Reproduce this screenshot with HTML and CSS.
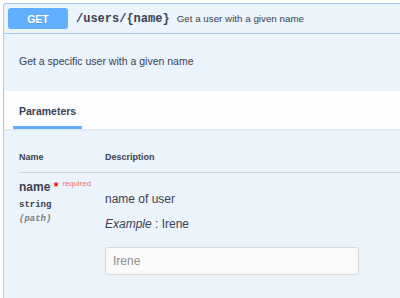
FILE: index.html
```html
<html>
<head>
<meta http-equiv="Content-Type" content="text/html; charset=utf-8">
<title>GET /users/{name}</title>
<link rel="stylesheet" href="styles.css">
</head>
<body>

<div class="opblock">
  <div class="summary">
    <span class="method">GET</span>
    <span class="path">/users/{name}</span>
    <span class="summary-text">Get a user with a given name</span>
  </div>

  <div class="description">
    <p>Get a specific user with a given name</p>
  </div>

  <div class="section-header">
    <span class="tab">Parameters</span>
  </div>

  <div class="table-container">
    <table class="parameters">
      <thead>
        <tr>
          <td class="col-name">Name</td>
          <td>Description</td>
        </tr>
      </thead>
      <tbody>
        <tr>
          <td class="col-name">
            <div class="param-name">name<span class="star">&nbsp;*</span><span class="required">required</span></div>
            <div class="param-type">string</div>
            <div class="param-in">(path)</div>
          </td>
          <td class="col-desc">
            <p>name of user</p>
            <p class="example"><i>Example</i> : Irene</p>
            <input type="text" class="param-input" placeholder="Irene">
          </td>
        </tr>
      </tbody>
    </table>
  </div>
</div>

</body>
</html>
```

FILE: styles.css
```css
html, body {
  margin: 0;
  overflow: hidden;
  background: #fff;
  font-family: "Liberation Sans", Arial, Helvetica, sans-serif;
  color: #3b4151;
}

/* one operation block, cut off by the right and bottom edges */
.opblock {
  box-sizing: border-box;
  margin: 3px 0 0 3px;
  height: 295px;
  border: 1px solid #a3cbf5;
  border-right: none;
  border-bottom: none;
  border-top-left-radius: 3px;
  background: #ebf3fb;
}

.summary {
  display: flex;
  align-items: center;
  padding: 4px;
  border-bottom: 1px solid #a3cbf5;
}

.method {
  min-width: 60px;
  padding: 4.5px 0;
  margin-right: 8px;
  border-radius: 3px;
  background: #61affe;
  color: #fff;
  font-size: 10.5px;
  line-height: 12px;
  font-weight: bold;
  text-align: center;
  text-shadow: 0 1px 0 rgba(0,0,0,.1);
}

.path {
  padding-right: 7px;
  font-family: "Liberation Mono", "Courier New", monospace;
  font-size: 12px;
  font-weight: bold;
}

.summary-text {
  font-size: 9.8px;
}

.description {
  padding: 20px 15px 22px;
}
.description p {
  margin: 0;
  font-size: 10.5px;
  line-height: 15px;
}

.section-header {
  padding: 14px 15px 0;
  background: rgba(255,255,255,.85);
  box-shadow: 0 1px 2px rgba(0,0,0,.08);
}
.tab {
  display: inline-block;
  margin-left: -6px;
  padding: 0 6px 9px;
  border-bottom: 3px solid #61affe;
  font-size: 10.5px;
  line-height: 12px;
  font-weight: bold;
}

/* the table runs on past the right edge */
.table-container {
  padding: 14px 0 0 15px;
}

.parameters {
  width: 100%;
  border-collapse: collapse;
}
.parameters thead td {
  padding: 9px 0;
  font-size: 9px;
  line-height: 11px;
  font-weight: bold;
  border-bottom: 1px solid #d0d8e3;
}
.parameters tbody td {
  padding: 7px 0 0;
  vertical-align: top;
}
.col-name { width: 86px; }

.param-name {
  font-size: 12px;
  line-height: 14px;
  font-weight: bold;
}
.star { color: #f00; }
.required {
  position: relative;
  top: -5px;
  padding-left: 4px;
  color: rgba(255,0,0,.6);
  font-size: 7.8px;
  font-weight: normal;
}
.param-type {
  margin-top: 4px;
  font-family: "Liberation Mono", "Courier New", monospace;
  font-size: 9px;
  line-height: 11px;
  font-weight: bold;
}
.param-in {
  margin-top: 3px;
  font-family: "Liberation Mono", "Courier New", monospace;
  font-size: 9px;
  line-height: 11px;
  font-style: italic;
  font-weight: bold;
  color: #808080;
}

.col-desc p {
  margin: 12px 0 0;
  font-size: 12px;
  line-height: 14px;
}
.col-desc p.example { margin-top: 11px; }

.param-input {
  display: block;
  box-sizing: border-box;
  width: 254px;
  height: 28px;
  margin-top: 16px;
  padding: 0 7px;
  border: 1px solid #d9d9d9;
  border-radius: 3px;
  background: #fafafa;
  font-family: "Liberation Sans", Arial, sans-serif;
  font-size: 12px;
  color: #3b4151;
}
.param-input::placeholder { color: #8e8e8e; }
```
